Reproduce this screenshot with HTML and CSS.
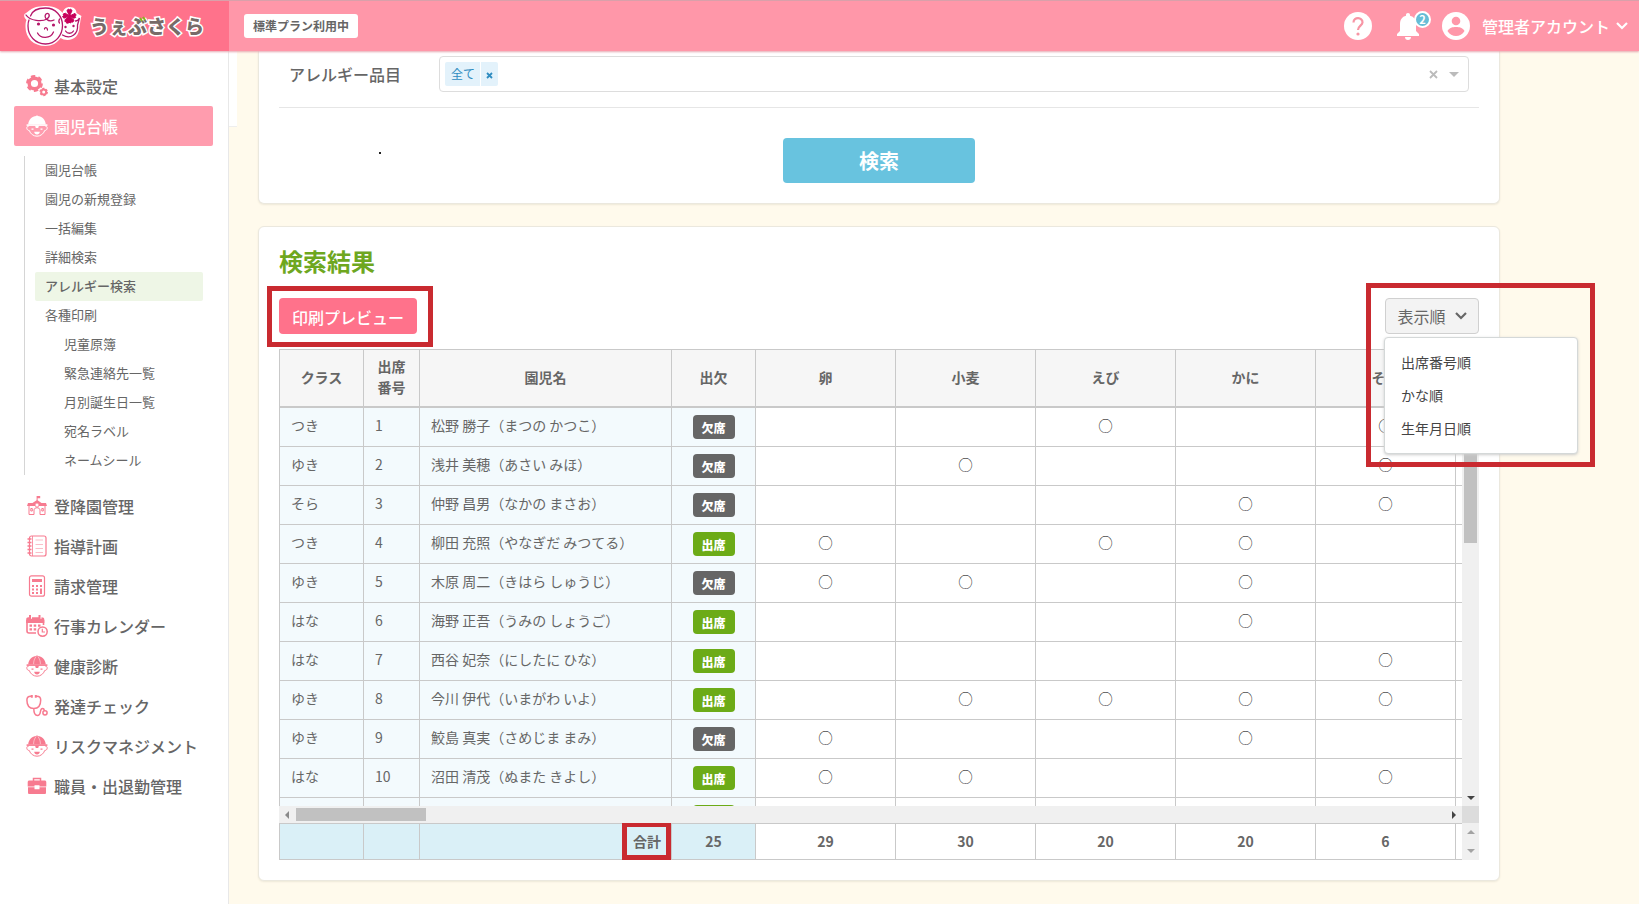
FILE: index.html
```html
<!DOCTYPE html>
<html lang="ja">
<head>
<meta charset="utf-8">
<meta name="viewport" content="width=device-width, initial-scale=1">
<title>アレルギー検索</title>
<link rel="stylesheet" href="styles.css">
</head>
<body>
<svg class="sprite" aria-hidden="true">
  <symbol id="child" viewBox="0 0 22 22">
    <path fill="currentColor" d="M2.200 9.600C2.500 4.800 6 1.400 10.300 1.100V.6h1.400v.5C16 1.400 19.500 4.800 19.800 9.600z"/>
    <path class="seam" fill="none" d="M7.600 9.500C7.500 6 8.500 3.500 10.200 1.500M14.400 9.500C14.500 6 13.500 3.500 11.800 1.500"/>
    <path fill="currentColor" d="M.6 9.300h20.800v1.600H.6z"/>
    <path fill="none" stroke="currentColor" stroke-width="1" d="M2.800 11C1 11 .6 12.200.9 13.600c.3 1.200 1.200 1.900 2.300 1.800C4.500 19 7.500 21.200 11 21.200s6.500-2.200 7.800-5.800c1.100.1 2-.6 2.300-1.800.3-1.400-.1-2.600-1.900-2.600"/>
    <path fill="currentColor" d="M5.500 13.400h2v1.400h-2zM14.500 13.400h2v1.400h-2zM8.200 16.800h5.600c-.2 1.700-1.300 2.600-2.800 2.600s-2.600-.9-2.800-2.600zM9 10.500h4l-.8 2.500H9.800z"/>
  </symbol>
  <symbol id="gear" viewBox="0 0 22 22">
    <circle cx="8.500" cy="8.500" r="5.300" fill="none" stroke="currentColor" stroke-width="3.400"/>
    <circle cx="8.500" cy="8.500" r="7.300" fill="none" stroke="currentColor" stroke-width="2.200" stroke-dasharray="4.400 3.240"/>
    <circle cx="17.700" cy="17" r="2.500" fill="none" stroke="currentColor" stroke-width="2"/>
    <circle cx="17.700" cy="17" r="3.600" fill="none" stroke="currentColor" stroke-width="1.300" stroke-dasharray="2.100 1.670"/>
  </symbol>
  <symbol id="school" viewBox="0 0 22 22">
    <path fill="currentColor" d="M10.600 1h3.600v2.200h-2.600v2L15.500 8H20l1 3H1l1-3h4.500l4.100-2.800z"/>
    <path fill="none" stroke="currentColor" d="M3 11v8.500h5M19 11v8.500h-5M8 19.500V15c0-3 6-3 6 0v4.500M4.800 13.500h1.500v2.500H4.800zM15.800 13.500h1.500v2.500h-1.500z"/>
    <circle cx="11" cy="10" r="2" fill="#fff" stroke="currentColor" stroke-width=".8"/>
  </symbol>
  <symbol id="note" viewBox="0 0 22 22">
    <rect x="3.500" y="1" width="16.500" height="20" rx="2" fill="none" stroke="currentColor" stroke-width="1.200"/>
    <path fill="none" stroke="currentColor" stroke-width=".8" d="M6.500 1v20"/>
    <path fill="none" stroke="currentColor" stroke-width=".7" stroke-opacity=".7" d="M9.500 5H17M9.500 9.500H17M9.500 13.500H17M9.500 17.500H17"/>
    <path stroke="currentColor" stroke-width="1.300" d="M1.500 4h4M1.500 7.500h4M1.500 11h4M1.500 14.500h4M1.500 18h4"/>
  </symbol>
  <symbol id="calc" viewBox="0 0 22 22">
    <rect x="3.500" y=".8" width="15" height="20.400" rx="2" fill="none" stroke="currentColor" stroke-width="1.200"/>
    <path fill="currentColor" d="M6 4h10v3H6zM6 10h2v2H6zM10 10h2v2h-2zM14 10h2v2h-2zM6 13.500h2v2H6zM10 13.500h2v2h-2zM14 13.500h2V19h-2zM6 17h2v2H6zM10 17h2v2h-2z"/>
  </symbol>
  <symbol id="calendar" viewBox="0 0 22 22">
    <path fill="none" stroke="currentColor" stroke-width="1.600" d="M1 5v11c0 1.500.5 2 2 2h7M17.500 5v5"/>
    <path fill="currentColor" d="M.2 8V4.500C.2 3 1 2.300 2.500 2.300H3V0h2v3.800h1V2.300h6.500V0h2v3.800h1V2.300c1.800 0 2.800.7 2.800 2.200V8zM3.500 9.500H6v2.300H3.500zM7.700 9.500h2.500v2.300H7.700zM12 9.500h2.500v2.300H12zM3.500 13.300H6v2.300H3.500zM7.700 13.300h2.500v2.300H7.700z"/>
    <circle cx="16.600" cy="16.600" r="4.600" fill="#fff" stroke="currentColor" stroke-width="1.500"/>
    <path fill="none" stroke="currentColor" stroke-width="1.200" d="M16.300 13.800v3.200h2.700"/>
  </symbol>
  <symbol id="stethoscope" viewBox="0 0 22 22">
    <path fill="none" stroke="currentColor" stroke-width="1.500" d="M5.500 1.300C2 1 .9 2.500.9 5c0 4.500 2 8.500 6.900 8.500s6.900-4 6.900-8.500c0-2.500-1.100-4-4.600-3.700M7.800 13.500c0 4 1.200 7 3.700 7 4.500 0 1.500-7 5-7 1.600 0 1.800 1.500 1.800 2.600"/>
    <circle cx="19" cy="17.800" r="2.100" fill="none" stroke="currentColor" stroke-width="1.500"/>
    <path fill="currentColor" d="M4.800 0h2v2.800h-2zM8.800 0h2v2.800h-2z"/>
  </symbol>
  <symbol id="case" viewBox="0 0 22 22">
    <path fill="none" stroke="currentColor" stroke-width="1.500" d="M7.500 6V3.500h7V6"/>
    <path fill="currentColor" d="M3.500 5.500h15c1.200 0 1.800.6 1.800 1.800v4.300h-6.800v-1.400h-5v1.400H1.700V7.300c0-1.200.6-1.800 1.800-1.800zM2 12.300h6.500v1.900h5v-1.900H20v5.200c0 1-.5 1.500-1.500 1.500h-15c-1 0-1.500-.5-1.500-1.500z"/>
  </symbol>
  <symbol id="chevron" viewBox="0 0 12 8">
    <path fill="none" stroke="currentColor" stroke-width="2.200" d="M1 1l5 5 5-5"/>
  </symbol>
</svg>

<header class="header">
  <a class="brand" href="#">
    <svg class="brand-mark" viewBox="0 0 58 42" aria-hidden="true">
      <path fill="#fff" d="M1 9C8 5 8 1 23 1c9 0 14 4 16 7 1-4 4-6 7-6 5 0 7 3 7 6l5 3c-1 2-1 6-2 10 0 9-5 14-12 14-3 0-5-1-7-2-3 5-9 8-15 8C10 41 2 33 2 22c0-3 0-5 1-7-2-2-3-4-2-6z"/>
      <g fill="none" stroke="#b5176a" stroke-width="1.300" stroke-linecap="round">
        <path d="M2.500 10c4 6 16 7 21 4 4-3 2-7-1-5-3 3 2 9 8 6"/>
        <path d="M7 11C9 5 15 3 22 3c10 0 17 8 17 17.500S32 39 22 39 4.500 31 4.500 21c0-3 0-4 1-6M36 14c-1 2-1 3 0 4M39 30c8 5 16-1 15-10l2-7c-1 2-2 3-4 3"/>
        <path d="M14 28c3 6 13 6 16-1M21 24c0-2 3-2 3 1M42 26c2 3 6 3 8 0"/>
      </g>
      <g fill="#b5176a">
        <circle cx="15" cy="19" r="1.600"/><circle cx="30" cy="20" r="1.600"/><circle cx="42" cy="22" r="1.200"/><circle cx="50" cy="21" r="1.200"/>
        <path fill="#c8005a" d="M46 11l-2.600-5.500L45 4l1 1 1-1 1.600 1.500zM46 11l5.500-2.600 1.200 1.800-1.200 1 .7 1.300-2.200.8zM46 11l4.500 4.200-1.200 2-1.300-.5-.8 1.300-2-.8zM46 11l-.8 7-2 .2-.2-1.400-1.600-.2.300-2.200zM46 11l-5.700 2.200-1.300-1.800 1.200-1-.6-1.300 2.200-.9z" stroke="#c8005a" stroke-width="1"/>
      </g>
    </svg>
    <span class="brand-name">うぇぶさくら<svg class="leaf" viewBox="0 0 8 7" aria-hidden="true"><path fill="none" stroke="#86b81b" stroke-width="2" d="M1 2l2 3M4 1l2 3"/></svg></span>
  </a>
  <div class="bar">
    <span class="plan">標準プラン利用中</span>
    <div class="tools">
      <button class="tool" type="button" aria-label="ヘルプ">
        <svg width="28" height="28" viewBox="0 0 28 28"><circle cx="14" cy="14" r="14" fill="#fff"/><path fill="none" stroke="#f795a5" stroke-width="2.200" d="M9.500 10.500c0-6 9.300-5.500 9 0-.2 3-4.500 3.500-4.500 7.500"/><circle cx="14" cy="22" r="1.600" fill="#f795a5"/></svg>
      </button>
      <button class="tool bell" type="button" aria-label="お知らせ">
        <svg width="22" height="27" viewBox="0 0 22 27"><path fill="#fff" d="M11 0c1.300 0 2 .8 2 2v.8c4 1 6 4 6 8.200v7l3 3v2H0v-2l3-3v-7c0-4.200 2-7.200 6-8.200V2c0-1.200.7-2 2-2zM8 24h6c0 2-1.200 3-3 3s-3-1-3-3z"/></svg>
        <span class="count">2</span>
      </button>
      <button class="account" type="button">
        <svg width="28" height="28" viewBox="0 0 28 28" aria-hidden="true"><circle cx="14" cy="14" r="14" fill="#fff"/><circle cx="14" cy="9" r="4.300" fill="#ff97a9"/><path fill="#ff97a9" d="M5.500 19c2-3.500 5-4 8.500-4s6.500.5 8.500 4c-2 3.500-5 5-8.500 5s-6.500-1.500-8.500-5z"/></svg>
        <span>管理者アカウント</span>
        <svg class="chevron" aria-hidden="true"><use href="#chevron"/></svg>
      </button>
    </div>
  </div>
</header>

<div class="body">
  <nav class="sidebar">
    <a class="item" href="#"><svg class="icon"><use href="#gear"/></svg>基本設定</a>
    <a class="item current" href="#"><svg class="icon"><use href="#child"/></svg>園児台帳</a>
    <ul class="sub">
      <li><a href="#">園児台帳</a></li>
      <li><a href="#">園児の新規登録</a></li>
      <li><a href="#">一括編集</a></li>
      <li><a href="#">詳細検索</a></li>
      <li><a class="here" href="#">アレルギー検索</a></li>
      <li><a href="#">各種印刷</a></li>
      <li><a class="deep" href="#">児童原簿</a></li>
      <li><a class="deep" href="#">緊急連絡先一覧</a></li>
      <li><a class="deep" href="#">月別誕生日一覧</a></li>
      <li><a class="deep" href="#">宛名ラベル</a></li>
      <li><a class="deep" href="#">ネームシール</a></li>
    </ul>
    <a class="item" href="#"><svg class="icon"><use href="#school"/></svg>登降園管理</a>
    <a class="item" href="#"><svg class="icon"><use href="#note"/></svg>指導計画</a>
    <a class="item" href="#"><svg class="icon"><use href="#calc"/></svg>請求管理</a>
    <a class="item" href="#"><svg class="icon"><use href="#calendar"/></svg>行事カレンダー</a>
    <a class="item" href="#"><svg class="icon"><use href="#child"/></svg>健康診断</a>
    <a class="item" href="#"><svg class="icon"><use href="#stethoscope"/></svg>発達チェック</a>
    <a class="item" href="#"><svg class="icon"><use href="#child"/></svg>リスクマネジメント</a>
    <a class="item" href="#"><svg class="icon"><use href="#case"/></svg>職員・出退勤管理</a>
  </nav>
  <div class="tab"></div>

  <main class="main">
    <form class="card search">
      <div class="field">
        <label class="label" for="allergen">アレルギー品目</label>
        <div class="picker">
          <span class="chip"><span class="chip-text">全て</span><button class="chip-x" type="button" aria-label="全てを外す"><svg width="7" height="7" viewBox="0 0 7 7"><path stroke="currentColor" stroke-width="1.800" d="M1 1l5 5M6 1L1 6"/></svg></button></span>
          <input class="picker-input" id="allergen" type="text">
          <button class="clear" type="button" aria-label="クリア"><svg width="9" height="9" viewBox="0 0 9 9"><path stroke="#bbb" stroke-width="1.800" d="M1 1l7 7M8 1L1 8"/></svg></button>
          <span class="caret"></span>
        </div>
      </div>
      <div class="actions">
        <span class="dot"></span>
        <button class="submit" type="submit">検索</button>
      </div>
    </form>

    <section class="card results">
      <h2 class="title">検索結果</h2>
      <div class="toolbar">
        <div class="marked print-mark"><button class="print" type="button">印刷プレビュー</button></div>
        <div class="marked order-mark">
          <button class="order" type="button">表示順<svg class="chevron" aria-hidden="true"><use href="#chevron"/></svg></button>
          <ul class="menu">
            <li><a href="#">出席番号順</a></li>
            <li><a href="#">かな順</a></li>
            <li><a href="#">生年月日順</a></li>
          </ul>
        </div>
      </div>
      <div class="grid">
        <div class="pane rows-pane">
          <table class="table rows">
            <colgroup><col class="c-class"><col class="c-no"><col class="c-name"><col class="c-state"><col span="6" class="c-food"></colgroup>
            <thead><tr><th>クラス</th><th>出席<br>番号</th><th>園児名</th><th>出欠</th><th>卵</th><th>小麦</th><th>えび</th><th>かに</th><th>そば</th><th></th></tr></thead>
            <tbody>
              <tr><td>つき</td><td>1</td><td>松野 勝子（まつの かつこ）</td><td><span class="state">欠席</span></td><td></td><td></td><td>◯</td><td></td><td>◯</td><td></td></tr>
              <tr><td>ゆき</td><td>2</td><td>浅井 美穂（あさい みほ）</td><td><span class="state">欠席</span></td><td></td><td>◯</td><td></td><td></td><td>◯</td><td></td></tr>
              <tr><td>そら</td><td>3</td><td>仲野 昌男（なかの まさお）</td><td><span class="state">欠席</span></td><td></td><td></td><td></td><td>◯</td><td>◯</td><td></td></tr>
              <tr><td>つき</td><td>4</td><td>柳田 充照（やなぎだ みつてる）</td><td><span class="state in">出席</span></td><td>◯</td><td></td><td>◯</td><td>◯</td><td></td><td></td></tr>
              <tr><td>ゆき</td><td>5</td><td>木原 周二（きはら しゅうじ）</td><td><span class="state">欠席</span></td><td>◯</td><td>◯</td><td></td><td>◯</td><td></td><td></td></tr>
              <tr><td>はな</td><td>6</td><td>海野 正吾（うみの しょうご）</td><td><span class="state in">出席</span></td><td></td><td></td><td></td><td>◯</td><td></td><td></td></tr>
              <tr><td>はな</td><td>7</td><td>西谷 妃奈（にしたに ひな）</td><td><span class="state in">出席</span></td><td></td><td></td><td></td><td></td><td>◯</td><td></td></tr>
              <tr><td>ゆき</td><td>8</td><td>今川 伊代（いまがわ いよ）</td><td><span class="state in">出席</span></td><td></td><td>◯</td><td>◯</td><td>◯</td><td>◯</td><td></td></tr>
              <tr><td>ゆき</td><td>9</td><td>鮫島 真実（さめじま まみ）</td><td><span class="state">欠席</span></td><td>◯</td><td></td><td></td><td>◯</td><td></td><td></td></tr>
              <tr><td>はな</td><td>10</td><td>沼田 清茂（ぬまた きよし）</td><td><span class="state in">出席</span></td><td>◯</td><td>◯</td><td></td><td></td><td>◯</td><td></td></tr>
              <tr><td></td><td></td><td></td><td><span class="state in"></span></td><td></td><td></td><td></td><td></td><td></td><td></td></tr>
            </tbody>
          </table>
        </div>
        <div class="vbar"><span class="vthumb"></span><span class="arrow down"></span></div>
        <div class="hbar"><span class="arrow left"></span><span class="hthumb"></span><span class="arrow right"></span></div>
        <div class="corner"></div>
        <div class="pane">
          <table class="table totals">
            <colgroup><col class="c-class"><col class="c-no"><col class="c-name"><col class="c-state"><col span="6" class="c-food"></colgroup>
            <tbody><tr><td></td><td></td><td><span class="marked sum-mark">合計</span></td><td>25</td><td>29</td><td>30</td><td>20</td><td>20</td><td>6</td><td></td></tr></tbody>
          </table>
        </div>
        <div class="vbar short"><span class="arrow up"></span><span class="arrow down"></span></div>
      </div>
    </section>
  </main>
</div>
</body>
</html>
```
FILE: styles.css
```css
* { box-sizing: border-box; }
body {
  margin: 0;
  min-height: 100vh;
  display: flex;
  flex-direction: column;
  background: #fffaec;
  color: #666;
  font: 14px/21px "Noto Sans CJK JP", "Noto Sans", sans-serif;
}
a { color: inherit; text-decoration: none; }
button { border: 0; padding: 0; background: none; color: inherit; font: inherit; cursor: pointer; }
ul { list-style: none; margin: 0; padding: 0; }
.sprite { display: none; }
.chevron { width: 12px; height: 8px; }

.header { display: flex; height: 51px; color: #fff; border-top: 1px solid #d9a0aa; box-shadow: 0 1px 2px #e5a8b0; position: relative; }
.brand { width: 229px; flex: none; display: flex; align-items: center; gap: 8px; padding-left: 23px; background: #ff728b; }
.brand-mark { width: 59px; height: 42px; }
.brand-name {
  position: relative;
  font-size: 19px;
  line-height: 28px;
  font-weight: 900;
  color: #776b68;
  -webkit-text-stroke: 3px #fff;
  paint-order: stroke fill;
}
.leaf { position: absolute; left: 49px; top: 4px; width: 8px; height: 7px; }
.bar { flex: 1; display: flex; align-items: center; justify-content: space-between; padding: 0 11px 0 15px; background: #ff97a9; }
.plan { padding: 0 9px; border-radius: 3px; background: #fff; color: #666; font-size: 12px; line-height: 24px; font-weight: 700; }
.tools { display: flex; align-items: center; }
.tool { display: flex; position: relative; }
.bell { margin: 0 23px 0 25px; }
.count {
  position: absolute;
  top: -2px;
  left: 17px;
  width: 17px;
  height: 17px;
  border: 2px solid #fff;
  border-radius: 50%;
  background: #66bdd6;
  font-size: 11px;
  line-height: 13px;
  font-weight: 700;
}
.account { display: flex; align-items: center; gap: 12px; font-size: 16px; line-height: 24px; font-weight: 500; }
.account .chevron { margin-left: -6px; }

.body { flex: 1; display: flex; align-items: stretch; }
.sidebar { width: 229px; flex: none; padding: 15px 15px 0 14px; background: #fff; border-right: 1px solid #e8e8e8; }
.item { display: flex; align-items: center; gap: 6px; height: 40px; padding-left: 12px; border-radius: 2px; font-size: 16px; font-weight: 500; }
.icon { width: 22px; height: 22px; color: #f77b90; }
.seam { stroke: #fff; stroke-width: .8; stroke-opacity: .6; }
.current { background: #ff9cae; color: #fff; }
.current .icon { color: #fff; }
.current .seam { stroke: #ff9cae; stroke-opacity: 1; }
.sub { margin: 10px 10px 11px; padding-left: 10px; border-left: 1px solid #d5d5d5; font-size: 13px; line-height: 27px; }
.sub a { display: block; padding: 0 0 2px 10px; border-radius: 2px; }
.sub .deep { padding-left: 29px; }
.sub .here { background: #eef6e6; font-weight: 500; }
.tab { width: 8px; height: 76px; flex: none; background: #fff; border-bottom: 1px solid #eee; }

.main { flex: 1; min-width: 0; padding: 0 21px; }
.card { max-width: 1242px; border: 1px solid #ebe8de; border-radius: 6px; background: #fff; box-shadow: 0 1px 2px #eee8d8; }
.search { padding: 5px 20px 20px; border-top: 0; border-radius: 0 0 6px 6px; }
.field { display: flex; align-items: center; padding: 0 10px 15px; border-bottom: 1px solid #e6e6e6; }
.label { width: 150px; flex: none; font-size: 16px; line-height: 24px; font-weight: 500; }
.picker { flex: 1; display: flex; align-items: center; height: 36px; padding: 0 9px 0 5px; border: 1px solid #ddd; border-radius: 4px; }
.chip { display: flex; width: 53px; height: 24px; align-items: center; border-radius: 2px; background: #e3f2fb; color: #2f8cc0; font-size: 12px; line-height: 24px; }
.chip-text { flex: 1; padding-left: 6px; }
.chip-x { width: 18px; height: 24px; border-left: 1px solid #fff; }
.picker-input { flex: 1; min-width: 0; border: 0; outline: 0; background: none; font: inherit; }
.clear { display: flex; margin-right: 11px; }
.caret { border: 5px solid transparent; border-top-color: #bbb; border-bottom: 0; }
.actions { display: flex; justify-content: center; padding-top: 30px; position: relative; }
.dot { position: absolute; left: 100px; top: 44px; width: 2px; height: 2px; background: #222; }
.submit { width: 192px; height: 45px; border-radius: 4px; background: #68c3df; color: #fff; font-size: 20px; font-weight: 700; }

.results { margin-top: 22px; padding: 16px 20px 20px; }
.title { margin: 0 0 19px; color: #6ea71f; font-size: 24px; line-height: 36px; font-weight: 700; }
.toolbar { display: flex; justify-content: space-between; margin-bottom: 15px; }
.marked { position: relative; }
.marked::after { content: ""; position: absolute; border: 5px solid #c92a30; pointer-events: none; }
.print-mark::after { inset: -12px -16px -13px -12px; }
.order-mark::after { inset: -15px -116px -133px -19px; z-index: 3; }
.sum-mark::after { inset: -9px -10px -9px -11px; z-index: 2; }
.print { display: block; width: 138px; height: 36px; padding-top: 2px; border-radius: 4px; background: #ff728b; color: #fff; font-size: 16px; font-weight: 500; }
.order { display: flex; align-items: center; justify-content: center; gap: 9px; width: 94px; height: 36px; border: 1px solid #d0d0d0; border-radius: 4px; background: #f3f3f3; font-size: 16px; }
.menu {
  position: absolute;
  z-index: 2;
  top: 39px;
  left: -1px;
  width: 194px;
  padding: 8px 16px;
  border: 1px solid #d4d8d8;
  border-radius: 4px;
  background: #fff;
  box-shadow: 0 1px 3px #ccc;
  color: #444;
  line-height: 33px;
}
.menu a { display: block; }

.grid { display: grid; grid-template-columns: minmax(0, 1fr) 17px; }
.pane { overflow: hidden; }
.rows-pane { height: 457px; }
.table { width: 1316px; table-layout: fixed; border-spacing: 0; }
.c-class, .c-state { width: 84px; }
.c-no { width: 56px; }
.c-name { width: 252px; }
.c-food { width: 140px; }
.table th { height: 59px; padding: 0 0 2px; border: 1px solid #c9c9c9; border-width: 1px 0 2px 1px; background: #f6f6f6; font-weight: 700; }
.table td { height: 39px; padding: 0 11px; border: 1px solid #c9c9c9; border-width: 0 0 1px 1px; }
.table td:nth-child(n+4) { padding: 0; text-align: center; }
.table td:nth-child(-n+4) { background: #f3fafd; }
.rows td:nth-child(-n+3) { padding-bottom: 3px; }
.rows td:nth-child(n+5) { padding-bottom: 3px; color: #111; }
.state { display: block; width: 42px; height: 24px; margin: 0 auto; border-radius: 4px; background: #666; color: #fff; font-size: 12px; line-height: 26px; font-weight: 900; }
.in { background: #6cab17; }
.table.totals td { height: 37px; border-top-width: 1px; font-weight: 700; }
.table.totals td:nth-child(-n+4) { background: #daf0f7; }
.table.totals td:nth-child(3) { padding-right: 10px; text-align: right; }

.vbar { display: flex; flex-direction: column; align-items: center; justify-content: space-between; padding: 75px 0 6px; background: #f0f0f0; }
.vthumb { width: 13px; height: 119px; background: #c1c1c1; }
.short { padding: 7px 0; }
.hbar { display: flex; align-items: center; padding: 0 6px; background: #f0f0f0; height: 17px; }
.hthumb { width: 130px; height: 13px; margin: 0 auto 0 7px; background: #c1c1c1; }
.corner { background: #dcdcdc; }
.arrow { border: 4px solid transparent; }
.left { border-right-color: #8a8a8a; border-left: 0; }
.right { border-left-color: #444; border-right: 0; }
.down { border-top-color: #444; border-bottom: 0; }
.up { border-bottom-color: #a3a3a3; border-top: 0; }
.short .down { border-top-color: #a3a3a3; }
```
